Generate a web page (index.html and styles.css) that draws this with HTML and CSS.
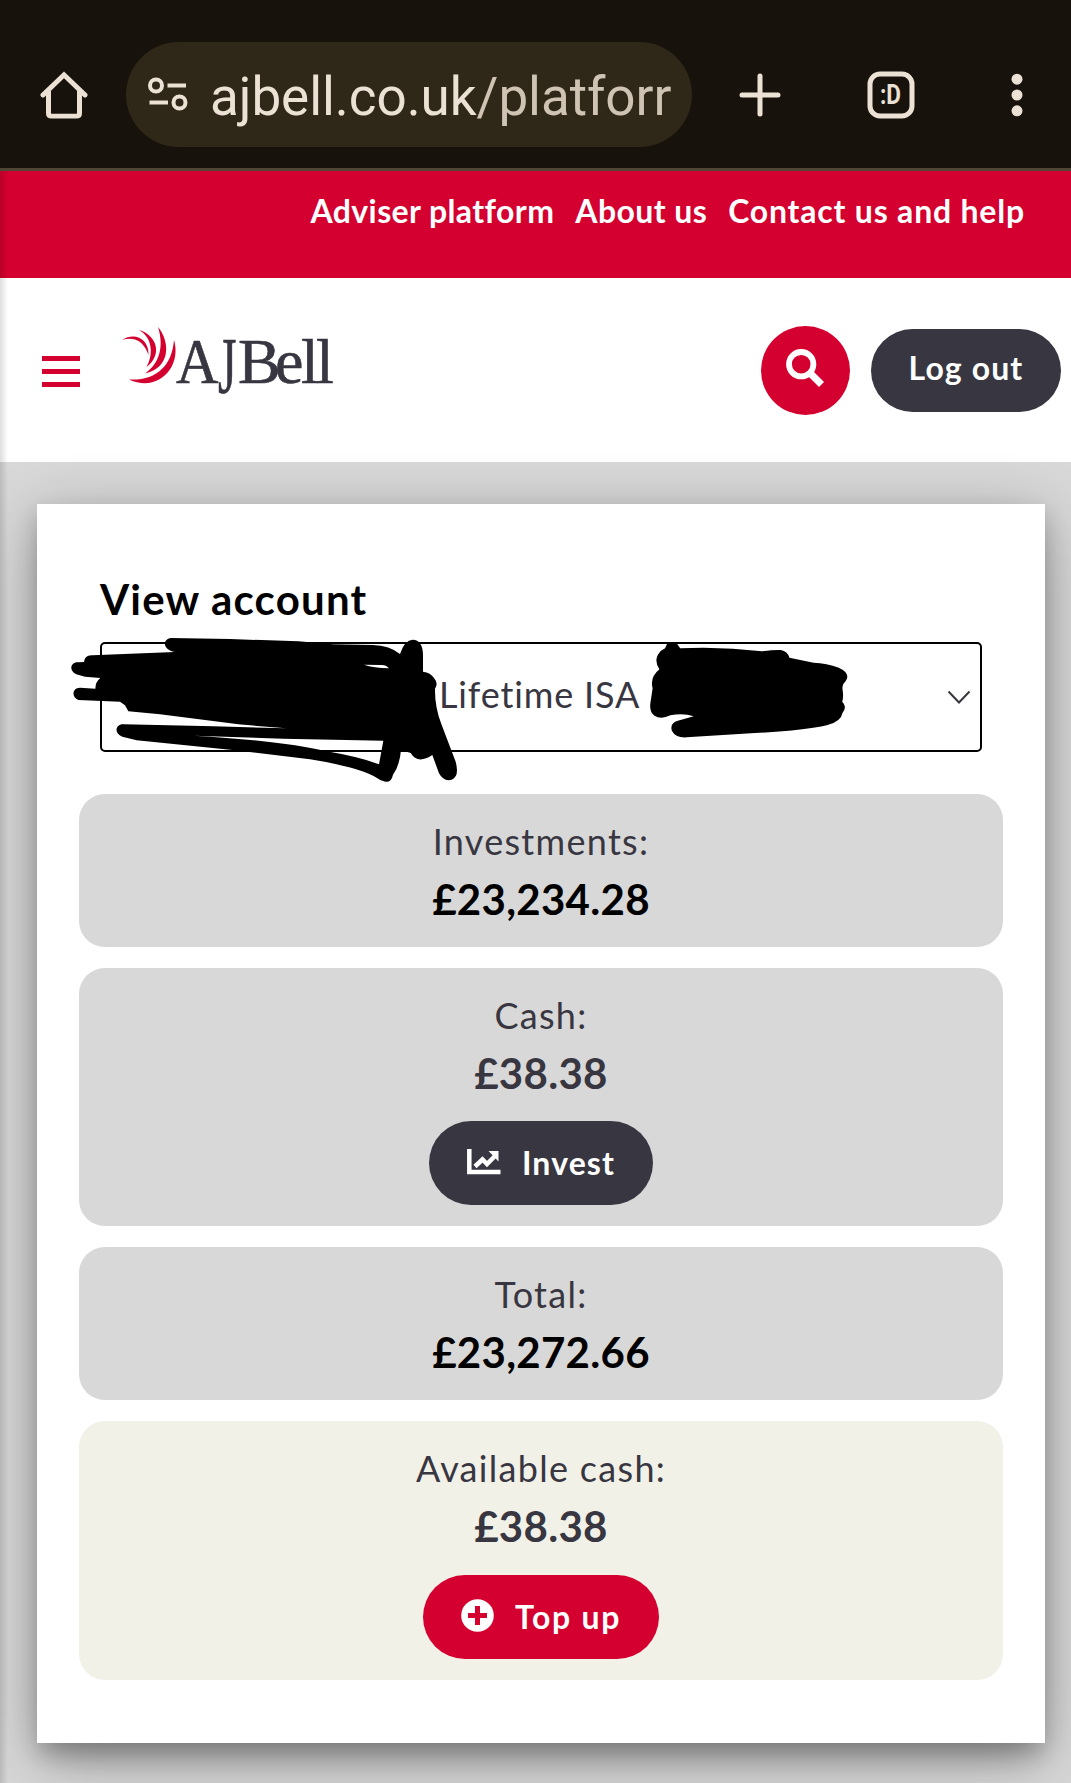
FILE: index.html
```html
<!DOCTYPE html>
<html lang="en">

<head>
    <meta charset="utf-8" />
    <meta name="viewport" content="width=device-width, initial-scale=1" />
    <title>AJ Bell - My account</title>
    <link rel="stylesheet" href="styles.css">
</head>

<body>
    <div class="browser-bar">
        <svg class="home" width="48" height="48" viewBox="0 0 48 50" preserveAspectRatio="none">
            <path d="M3 25 L24 4 L45 25 M8.500 21 V44 Q8.500 47 11.500 47 H36.500 Q39.500 47 39.500 44 V21" />
        </svg>
        <div class="address">
            <svg class="tune" width="40" height="34" viewBox="0 0 40 34">
                <circle cx="8" cy="8.500" r="6" />
                <circle cx="31.500" cy="25.500" r="6" />
                <path d="M19.500 8.500 H38 M1.500 25.500 H20" />
            </svg>
            <span class="url">ajbell.co.uk<span class="path">/platforr</span></span>
        </div>
        <svg class="plus" width="42" height="44" viewBox="0 0 42 44">
            <path d="M21 3 V41 M3 22 H39" />
        </svg>
        <svg class="tabs" width="48" height="48" viewBox="0 0 48 48">
            <rect x="3" y="3" width="42" height="42" rx="10" />
            <text x="13" y="33" textLength="21" lengthAdjust="spacingAndGlyphs">:D</text>
        </svg>
        <svg class="dots" width="12" height="46" viewBox="0 0 12 46">
            <circle cx="6" cy="7.200" r="5.500" />
            <circle cx="6" cy="23" r="5.500" />
            <circle cx="6" cy="38.800" r="5.500" />
        </svg>
    </div>

    <div class="page">
        <nav class="top-links">
            <a class="adviser">Adviser platform</a>
            <a class="about">About us</a>
            <a class="contact">Contact us and help</a>
        </nav>

        <header class="site-header">
            <div class="burger"><i></i><i></i><i></i></div>
            <svg class="logo" width="212" height="70" viewBox="0 0 212 70">
                <g fill="#d4002f">
                    <path d="M0 14 C12 6 27 12 26.500 29 C22 15 12 10 0 14 Z" />
                    <path d="M17 4 C35 9 41 29 24.500 41 C32 28 30 11 17 4 Z" />
                    <path d="M36 1 C49 17 48 42 23 47.500 C38 37 42 20 36 1 Z" />
                    <path d="M52 14 C60 41 36 67 7 53.500 C34 55 50 40 52 14 Z" />
                </g>
                <text transform="translate(54 57) scale(.920 1)">A</text>
                <text transform="translate(96 67) scale(.740 1.240)">J</text>
                <text y="57" x="116 153 179 194">Bell</text>
            </svg>
            <button class="search">
                <svg width="38" height="38" viewBox="0 0 38 38">
                    <circle cx="15.200" cy="15.200" r="12.200" />
                    <path d="M24.500 24.500 L35.500 35.500" />
                </svg>
            </button>
            <button class="btn logout"><span>Log out</span></button>
        </header>

        <main>
            <section class="card">
                <h1>View account</h1>
                <div class="select">
                    <span class="selected">Lifetime ISA</span>
                    <svg class="chevron" width="24" height="16" viewBox="0 0 24 16">
                        <path d="M1.500 2.500 L12 13.500 L22.500 2.500" />
                    </svg>
                    <svg class="mark mark-name" viewBox="0 0 1320 720">
                        <path d="M362 234 L540 237 L745 244 L850 253 L968 255 Q1020 257 1050 282 Q1064 240 1088 239 Q1118 240 1119 285 L1119 335 Q1142 338 1152 354 Q1166 370 1155 386 Q1154 440 1174 492 L1217 605 Q1229 650 1205 659 Q1181 666 1167 640 L1147 585 Q1103 614 1082 579 L1053 570 Q1049 617 1029 644 Q1024 668 1006 665 Q990 662 981 654 Q930 622 780 598 L540 569 L260 541 L217 530 C190 519 197 492 220 493 L490 499 L708 505 L565 493 L330 463 L235 454 L225 436 L210 425 L85 420 C64 413 66 383 90 383 L136 386 Q136 366 151 354 L105 350 L79 343 C55 332 61 304 87 307 L102 306 Q104 284 128 286 L374 276 C342 271 333 240 362 234 Z M430 527 L700 536 L1000 542 L987 613 Q930 591 830 574 Q700 543 430 527 Z M942 314 Q970 324 1017 325 Q1008 313 990 315 Z" />
                    </svg>
                    <svg class="mark mark-number" viewBox="0 0 1568 720" preserveAspectRatio="none">
                        <path d="M497 250 H522 L531 265 Q640 259 748 274 Q782 269 798 270 Q816 274 821 293 L885 308 Q920 309 952 323 Q986 341 969 365 Q960 373 962 390 Q965 410 961 425 Q975 440 962 458 Q958 485 920 496 Q860 512 730 519 L548 532 Q519 534 509 512 Q503 489 525 482 L567 469 Q540 459 505 466 Q480 480 463 467 Q449 456 452 430 L458 385 Q450 352 476 328 Q462 303 472 284 Q480 270 491 265 Z" />
                    </svg>
                </div>

                <div class="box">
                    <p class="label">Investments:</p>
                    <p class="value dark">£23,234.28</p>
                </div>
                <div class="box">
                    <p class="label">Cash:</p>
                    <p class="value">£38.38</p>
                    <button class="btn invest">
                        <svg width="34" height="26" viewBox="0 0 34 26">
                            <path d="M2.300 0 V23 H33.500" />
                            <path d="M8 17.500 L15.500 10.500 L20 15 L28 7" />
                            <path class="head" d="M21.500 2 H31.500 V12.500 Z" />
                        </svg>
                        <span>Invest</span>
                    </button>
                </div>
                <div class="box">
                    <p class="label">Total:</p>
                    <p class="value dark">£23,272.66</p>
                </div>
                <div class="box available">
                    <p class="label">Available cash:</p>
                    <p class="value">£38.38</p>
                    <button class="btn topup">
                        <svg width="33" height="33" viewBox="0 0 33 33">
                            <circle cx="16.500" cy="16.500" r="16.300" />
                            <path d="M16.500 7 V26 M7 16.500 H26" />
                        </svg>
                        <span>Top up</span>
                    </button>
                </div>
            </section>
        </main>
    </div>
</body>

</html>
```
FILE: styles.css
```css
* {
    box-sizing: border-box;
}

body {
    margin: 0;
    font-family: Lato, "Open Sans", sans-serif;
    color: #383641;
    background-color: #d8d8d8;
    overflow: hidden;
}

h1,
p {
    margin: 0;
}

svg {
    display: block;
    flex: none;
}

/* browser toolbar */

.browser-bar {
    display: flex;
    align-items: center;
    height: 171px;
    padding: 21px 0 0 40px;
    background-color: #17120c;
    border-bottom: 3px solid #504638;
}

.home,
.tune,
.plus,
.tabs {
    fill: none;
    stroke: #ebe1d5;
    stroke-width: 5;
    stroke-linecap: round;
}

.address .tune {
    margin-top: -1px;
    stroke-width: 4;
    stroke-linecap: butt;
}

.tabs text {
    fill: #ebe1d5;
    stroke: none;
    font: bold 27px Roboto, sans-serif;
}

.address {
    display: flex;
    align-items: center;
    gap: 22px;
    width: 566px;
    height: 105px;
    margin-left: 38px;
    padding-left: 22px;
    border-radius: 53px;
    background-color: #2f2717;
}

.url {
    margin-top: 5px;
    font: 53px/64px Roboto, sans-serif;
    letter-spacing: -.05px;
    color: #ebe1d5;
    white-space: nowrap;
}

.url .path {
    color: #cfc4b4;
}

.plus {
    margin-left: 47px;
}

.tabs {
    margin-left: 86px;
}

.dots {
    margin-left: 96px;
    fill: #ebe1d5;
}

/* page */

.page {
    position: relative;
    height: 1612px;
}

.page::after {
    content: "";
    position: absolute;
    top: 0;
    bottom: 0;
    left: 0;
    width: 8px;
    background: linear-gradient(to right, rgba(0, 0, 0, .13), rgba(0, 0, 0, 0));
}

.top-links {
    display: flex;
    justify-content: flex-end;
    gap: 21px;
    height: 107px;
    padding: 20px 46px 0 0;
    background-color: #d4002f;
    color: #fff;
    font-size: 32px;
    font-weight: bold;
    line-height: 40px;
    letter-spacing: .4px;
    white-space: nowrap;
}

.contact {
    letter-spacing: .8px;
}

.site-header {
    display: flex;
    align-items: center;
    height: 184px;
    padding: 0 10px 0 42px;
    background-color: #fff;
}

.burger {
    display: flex;
    flex-direction: column;
    gap: 8px;
    margin-top: 2px;
}

.burger i {
    width: 38px;
    height: 5px;
    background-color: #d4002f;
}

.logo {
    margin: -19px 0 0 42px;
    overflow: visible;
}

.logo text {
    fill: #383641;
    stroke: #383641;
    stroke-width: .6;
    font: 64px "Liberation Serif", serif;
}

button {
    display: flex;
    align-items: center;
    justify-content: center;
    padding: 0;
    border: none;
    font-family: inherit;
    color: #fff;
}

.search {
    width: 89px;
    height: 89px;
    margin-left: auto;
    border-radius: 50%;
    background-color: #d4002f;
}

.search svg {
    margin: -4px 1px 0 0;
    fill: none;
    stroke: #fff;
    stroke-width: 5.8;
}

.search path {
    stroke-width: 7;
}

.btn {
    height: 84px;
    border-radius: 42px;
    background-color: #383641;
    font-size: 32px;
    font-weight: bold;
    line-height: 40px;
    letter-spacing: 1.1px;
    white-space: nowrap;
}

.logout {
    width: 190px;
    height: 83px;
    margin-left: 21px;
    padding-bottom: 4px;
}

main {
    padding: 42px 26px 40px 37px;
}

.card {
    display: flex;
    flex-direction: column;
    gap: 21px;
    height: 1239px;
    padding: 68px 42px 63px;
    background-color: #fff;
    box-shadow: 0 10px 21px rgba(0, 0, 0, .18), 0 16px 60px rgba(0, 0, 0, .29), 0 26px 26px -13px rgba(0, 0, 0, .13);
}

.card h1 {
    height: 49px;
    padding-left: 21px;
    color: #000;
    font-size: 42px;
    line-height: 54px;
    letter-spacing: 1.2px;
}

.select {
    position: relative;
    display: flex;
    align-items: center;
    height: 110px;
    margin: 0 21px;
    padding: 0 9px 0 337px;
    border: 2px solid #000;
    border-radius: 5px;
}

.selected {
    margin-top: -6px;
    font-size: 36px;
    line-height: 44px;
    letter-spacing: .85px;
}

.chevron {
    margin-left: auto;
    fill: none;
    stroke: #383641;
    stroke-width: 2;
}

/* pen marks over the private details */

.mark {
    position: absolute;
    top: -84px;
    height: 240px;
    fill-rule: evenodd;
}

.mark-name {
    left: -52px;
    width: 440px;
}

.mark-number {
    left: 378px;
    width: 591px;
}

.select + .box {
    margin-top: 21px;
}

.box {
    display: flex;
    flex-direction: column;
    align-items: center;
    padding: 21px;
    border-radius: 26px;
    background-color: #d8d8d8;
}

.available {
    background-color: #f1f1e8;
}

.label {
    height: 54px;
    font-size: 36px;
    line-height: 53px;
    letter-spacing: 1.3px;
}

.value {
    height: 57px;
    font-size: 42px;
    font-weight: bold;
    line-height: 60px;
    letter-spacing: .3px;
}

.dark {
    color: #000;
}

.box .btn {
    margin-top: 21px;
}

.invest {
    width: 224px;
    gap: 21px;
}

.invest svg {
    margin-top: -3px;
    fill: none;
    stroke: #fff;
    stroke-width: 4.5;
}

.invest .head {
    fill: #fff;
    stroke: none;
}

.box .topup {
    width: 236px;
    gap: 21px;
    margin-top: 22px;
    background-color: #d4002f;
    letter-spacing: 1.7px;
}

.topup svg {
    margin-top: -3px;
    fill: #fff;
}

.topup path {
    stroke: #d4002f;
    stroke-width: 5;
}
```
